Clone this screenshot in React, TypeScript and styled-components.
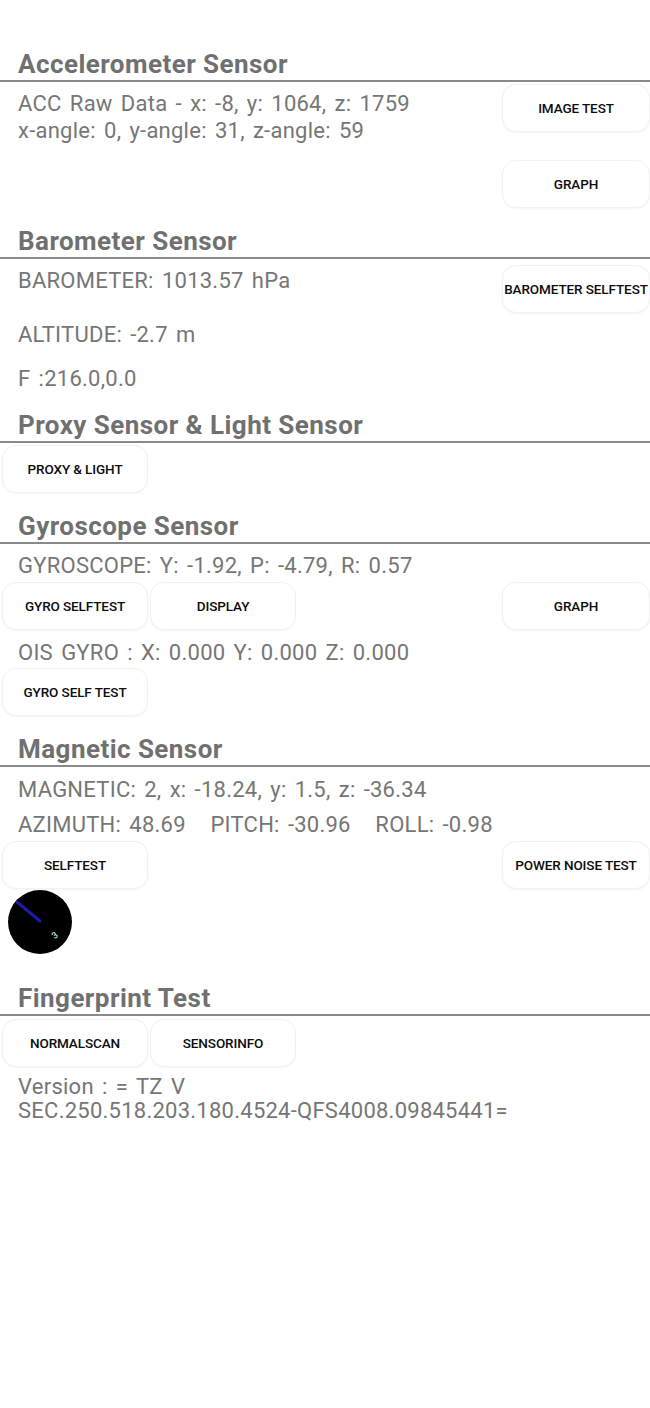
import styled, { createGlobalStyle } from "styled-components";

const GlobalStyle = createGlobalStyle`
  html, body {
    margin: 0;
    padding: 0;
    background: #ffffff;
  }
  body {
    font-family: Roboto, "Noto Sans", Arial, sans-serif;
  }
`;

const Page = styled.div`
  width: 650px;
  min-height: 1408px;
  padding-top: 48px;
  box-sizing: border-box;
  background: #ffffff;
  overflow: hidden;
`;

const Heading = styled.h2<{ $mt?: number }>`
  margin: ${({ $mt }) => $mt ?? 0}px 0 0 0;
  padding-left: 18px;
  font-family: Roboto, sans-serif;
  font-weight: 700;
  font-size: 26px;
  letter-spacing: 0.45px;
  line-height: 32px;
  color: #707070;
  border-bottom: 2px solid #8a8a8a;
`;

const Row = styled.div<{ $mt?: number }>`
  display: flex;
  justify-content: space-between;
  align-items: flex-start;
  margin-top: ${({ $mt }) => $mt ?? 0}px;
`;

const ButtonGroup = styled.div<{ $mt?: number }>`
  display: flex;
  gap: 2px;
  padding-left: 2px;
  margin-top: ${({ $mt }) => $mt ?? 0}px;
`;

const Column = styled.div<{ $gap?: number }>`
  display: flex;
  flex-direction: column;
  gap: ${({ $gap }) => $gap ?? 0}px;
`;

const Value = styled.div<{ $mt?: number; $lh?: number }>`
  margin-top: ${({ $mt }) => $mt ?? 0}px;
  padding-left: 18px;
  font-family: Roboto, sans-serif;
  font-size: 22px;
  letter-spacing: 0.25px;
  word-spacing: 2.5px;
  line-height: ${({ $lh }) => $lh ?? 27}px;
  color: #767676;
  white-space: pre;
`;

const Button = styled.button<{ $mt?: number; $wide?: boolean }>`
  flex: none;
  width: ${({ $wide }) => ($wide ? 148 : 146)}px;
  height: 48px;
  margin-top: ${({ $mt }) => $mt ?? 0}px;
  padding: 0;
  border: 1px solid #f1f1f1;
  border-radius: 14px;
  background: #ffffff;
  box-shadow: 0 1px 2px rgba(0, 0, 0, 0.04);
  font-family: Roboto, sans-serif;
  font-weight: 500;
  font-size: 13.5px;
  letter-spacing: -0.1px;
  color: #0c0c0c;
  text-transform: uppercase;
  white-space: nowrap;
  cursor: pointer;
`;

const Compass = styled.div`
  width: 64px;
  height: 64px;
  margin: 1px 0 0 8px;
`;

function CompassDial() {
  return (
    <Compass>
      <svg width="64" height="64" viewBox="0 0 64 64">
        <circle cx="32" cy="32" r="32" fill="#000" />
        <line x1="9" y1="12" x2="32" y2="31" stroke="#1c1ca8" strokeWidth="3" strokeLinecap="round" />
        <text
          x="44"
          y="48"
          fill="#ffffff"
          fontSize="9"
          fontFamily="Roboto, sans-serif"
          transform="rotate(-40 47 45)"
        >
          3
        </text>
      </svg>
    </Compass>
  );
}

export default function App() {
  return (
    <Page>
      <GlobalStyle />

      <Heading>Accelerometer Sensor</Heading>
      <Row>
        <Value $mt={7.5}>
          ACC Raw Data - x: -8, y: 1064, z: 1759
          {"\n"}x-angle: 0, y-angle: 31, z-angle: 59
        </Value>
        <Column $gap={28}>
          <Button $mt={2} $wide>IMAGE TEST</Button>
          <Button $wide>GRAPH</Button>
        </Column>
      </Row>

      <Heading $mt={17}>Barometer Sensor</Heading>
      <Row>
        <Value $mt={7.5}>BAROMETER: 1013.57 hPa</Value>
        <Button $mt={6} $wide>BAROMETER SELFTEST</Button>
      </Row>
      <Value $mt={7.5}>ALTITUDE: -2.7 m</Value>
      <Value $mt={17}>F :216.0,0.0</Value>

      <Heading $mt={17.5}>Proxy Sensor &amp; Light Sensor</Heading>
      <ButtonGroup $mt={2}>
        <Button>PROXY &amp; LIGHT</Button>
      </ButtonGroup>

      <Heading $mt={17}>Gyroscope Sensor</Heading>
      <Value $mt={7.5}>GYROSCOPE: Y: -1.92, P: -4.79, R: 0.57</Value>
      <Row $mt={3.5}>
        <ButtonGroup>
          <Button>GYRO SELFTEST</Button>
          <Button>DISPLAY</Button>
        </ButtonGroup>
        <Button $wide>GRAPH</Button>
      </Row>
      <Value $mt={8.5}>OIS GYRO : X: 0.000 Y: 0.000 Z: 0.000</Value>
      <ButtonGroup $mt={2.5}>
        <Button>GYRO SELF TEST</Button>
      </ButtonGroup>

      <Heading $mt={17}>Magnetic Sensor</Heading>
      <Value $mt={8.5}>MAGNETIC: 2, x: -18.24, y: 1.5, z: -36.34</Value>
      <Value $mt={8}>AZIMUTH: 48.69   PITCH: -30.96   ROLL: -0.98</Value>
      <Row $mt={3.5}>
        <ButtonGroup>
          <Button>SELFTEST</Button>
        </ButtonGroup>
        <Button $wide>POWER NOISE TEST</Button>
      </Row>
      <CompassDial />

      <Heading $mt={28}>Fingerprint Test</Heading>
      <ButtonGroup $mt={3}>
        <Button>NORMALSCAN</Button>
        <Button>SENSORINFO</Button>
      </ButtonGroup>
      <Value $mt={8} $lh={24}>
        Version : = TZ V
        {"\n"}SEC.250.518.203.180.4524-QFS4008.09845441=
      </Value>
    </Page>
  );
}
